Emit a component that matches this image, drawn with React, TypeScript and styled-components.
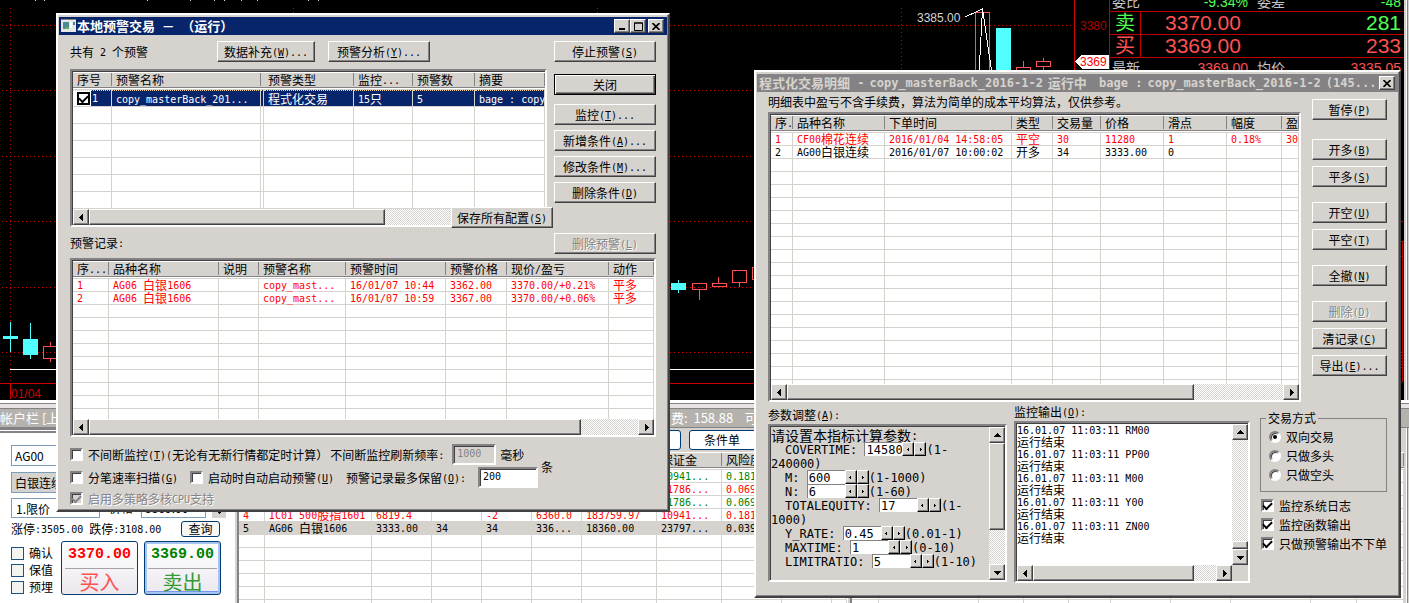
import React from 'react';
import styled, { createGlobalStyle, css } from 'styled-components';

const FACE = '#d6d3ce';
const SHADE = '#848284';
const DARK = '#424142';
const NAVY = '#08246b';
const RED = '#ff0000';

const Global = createGlobalStyle`
  * { box-sizing: border-box; }
  body { margin: 0; background: #000; }
  body, button, input, select, table {
    font-family: "Noto Sans CJK SC", sans-serif;
    font-size: 12px;
    line-height: 16px;
    color: #000;
  }
`;

/* ---------- text ---------- */

const Latin = styled.span<{ $size: number; $wrap?: boolean }>`
  font-family: "DejaVu Sans Mono", monospace;
  font-size: ${p => p.$size}px;
  line-height: 0;
  vertical-align: 1px;
  white-space: ${p => (p.$wrap ? 'normal' : 'pre')};
`;

/* Latin runs use a half-width face; "&X" underlines the access key. */
function T({ s, size = 10, wrap }: { s: string; size?: number; wrap?: boolean }) {
  const runs = s.split(/([\x20-\x7e]+)/).filter(Boolean);
  return (
    <>
      {runs.map((r, i) => {
        if (!/^[\x20-\x7e]/.test(r)) return <React.Fragment key={i}>{r}</React.Fragment>;
        const at = r.indexOf('&');
        return (
          <Latin key={i} $size={size} $wrap={wrap}>
            {at < 0 ? r : <>{r.slice(0, at)}<u>{r[at + 1]}</u>{r.slice(at + 2)}</>}
          </Latin>
        );
      })}
    </>
  );
}

/* ---------- classic controls ---------- */

const raised = css`
  background: ${FACE};
  border: 1px solid;
  border-color: #fff ${DARK} ${DARK} #fff;
  box-shadow: inset -1px -1px 0 ${SHADE};
`;

const sunken = css`
  border: 2px solid;
  border-color: ${SHADE} #fff #fff ${SHADE};
  box-shadow: inset 1px 1px 0 ${DARK};
`;

const Push = styled.button<{ $w: number; $default?: boolean }>`
  ${raised}
  width: ${p => p.$w}px;
  height: 21px;
  padding: 0;
  line-height: 17px;
  white-space: nowrap;
  ${p => p.$default && css`
    border-color: #000;
    box-shadow: inset 1px 1px 0 #fff, inset -1px -1px 0 ${DARK}, inset -2px -2px 0 ${SHADE};
  `}
  &:disabled { color: ${SHADE}; text-shadow: 1px 1px 0 #fff; }
`;

const Caption = styled.div<{ $active?: boolean }>`
  display: flex;
  align-items: center;
  height: 18px;
  padding: 0 3px 0 2px;
  font-size: 13px;
  font-weight: bold;
  white-space: nowrap;
  background: ${p => (p.$active ? NAVY : SHADE)};
  color: ${p => (p.$active ? '#fff' : FACE)};
`;
const CaptionText = styled.span`
  display: flex;
  flex: 1;
  gap: 5px;
  line-height: 18px;
`;
const CaptionButton = styled.button<{ $gap?: boolean }>`
  ${raised}
  display: grid;
  place-items: center;
  width: 16px;
  height: 14px;
  padding: 0;
  margin-left: ${p => (p.$gap ? 2 : 0)}px;
`;

const Window = styled.section<{ $x: number; $y: number; $w: number; $h: number }>`
  position: absolute;
  left: ${p => p.$x}px;
  top: ${p => p.$y}px;
  width: ${p => p.$w}px;
  min-height: ${p => p.$h}px;
  padding: 2px 1px 1px;
  background: ${FACE};
  border: 2px solid;
  border-color: #fff ${DARK} ${DARK} #fff;
  box-shadow: inset -1px -1px 0 ${SHADE};
`;

const Check = styled.input.attrs({ type: 'checkbox' })`
  ${sunken}
  appearance: none;
  flex: none;
  display: grid;
  place-items: center;
  width: 13px;
  height: 13px;
  margin: 0;
  background: #fff;
  &:checked::before {
    content: '';
    width: 7px;
    height: 4px;
    margin-bottom: 2px;
    border: solid #000;
    border-width: 0 0 2px 2px;
    transform: rotate(-45deg);
  }
  &:disabled { background: ${FACE}; }
  &:disabled::before { border-color: ${SHADE}; }
`;
const Radio = styled.input.attrs({ type: 'radio' })`
  ${sunken}
  appearance: none;
  flex: none;
  display: grid;
  place-items: center;
  width: 12px;
  height: 12px;
  margin: 0;
  border-radius: 50%;
  background: #fff;
  &:checked::before {
    content: '';
    width: 4px;
    height: 4px;
    border-radius: 50%;
    background: #000;
  }
`;
const Choice = styled.label<{ $off?: boolean }>`
  display: flex;
  align-items: center;
  gap: 5px;
  height: 19px;
  white-space: nowrap;
  ${p => p.$off && css`color: ${SHADE}; text-shadow: 1px 1px 0 #fff;`}
`;
const Field = styled.input<{ $w: number }>`
  ${sunken}
  width: ${p => p.$w}px;
  height: 21px;
  padding: 0 0 3px 3px;
  background: #fff;
  font-family: "DejaVu Sans Mono", monospace;
  font-size: 10px;
  &:disabled { background: ${FACE}; color: ${SHADE}; }
`;

/* ---------- scroll bars ---------- */

const Track = styled.div<{ $vertical?: boolean }>`
  display: flex;
  flex: none;
  flex-direction: ${p => (p.$vertical ? 'column' : 'row')};
  ${p => (p.$vertical ? 'width' : 'height')}: 16px;
  background: repeating-conic-gradient(#fff 0 25%, ${FACE} 0 50%) 0 0 / 2px 2px;
`;
const Arrow = styled.button`
  ${raised}
  display: grid;
  place-items: center;
  flex: none;
  width: 16px;
  height: 16px;
  padding: 0;
`;
const Thumb = styled.div<{ $size: number }>`
  ${raised}
  flex: 0 0 ${p => p.$size}px;
`;
const Rest = styled.div`flex: 1;`;

const arrows = { left: 'M5 0v7L1 3.500z', right: 'M2 0v7l4-3.500z', up: 'M0 5h7L3.500 1z', down: 'M0 2h7l-3.500 4z' };
const Glyph = ({ d }: { d: keyof typeof arrows }) => (
  <svg width="7" height="7" viewBox="0 0 7 7" shapeRendering="crispEdges"><path d={arrows[d]} /></svg>
);

function Scroll({ vertical, thumb, atEnd }: { vertical?: boolean; thumb: number; atEnd?: boolean }) {
  return (
    <Track $vertical={vertical}>
      <Arrow aria-label="back"><Glyph d={vertical ? 'up' : 'left'} /></Arrow>
      {atEnd && <Rest />}
      <Thumb $size={thumb} />
      {!atEnd && <Rest />}
      <Arrow aria-label="forward"><Glyph d={vertical ? 'down' : 'right'} /></Arrow>
    </Track>
  );
}

/* ---------- lists ---------- */

const Frame = styled.div<{ $h: number; $face?: boolean }>`
  ${sunken}
  display: flex;
  flex-direction: column;
  height: ${p => p.$h}px;
  padding: 1px 0 0 1px;
  background: ${p => (p.$face ? FACE : '#fff')};
`;
const View = styled.div`
  flex: 1;
  min-height: 0;
  overflow: hidden;
`;
const Grid = styled.table`
  table-layout: fixed;
  width: 100%;
  border-spacing: 0;
`;
const Th = styled.th`
  height: 18px;
  padding: 0;
  overflow: hidden;
  font-weight: normal;
  text-align: left;
  white-space: nowrap;
  background: linear-gradient(#fff 0 1px, ${FACE} 1px 15px, ${SHADE} 15px 16px, #fff 16px 17px, ${FACE} 17px);
`;
const ThLabel = styled.span`
  display: block;
  height: 13px;
  margin-bottom: 3px;
  padding-left: 4px;
  line-height: 13px;
  border-right: 1px solid ${SHADE};
  box-shadow: 1px 0 0 #fff;
`;
const Tr = styled.tr<{ $h: number; $color?: string; $bg?: string }>`
  color: ${p => p.$color || '#000'};
  td {
    height: ${p => p.$h}px;
    padding: 0 0 0 4px;
    line-height: 12px;
    white-space: nowrap;
    border: solid ${FACE};
    border-width: 0 1px 1px 0;
    background: ${p => p.$bg || 'transparent'};
  }
`;
const Picked = styled(Tr)`
  td {
    line-height: 14px;
    color: #fff;
    background: ${NAVY};
    border-top: 1px dotted #f7d384;
  }
  td:first-child {
    background: linear-gradient(90deg, #fff 18px, ${NAVY} 18px);
  }
`;
const CheckCell = styled.span`
  display: flex;
  align-items: center;
  gap: 2px;
  ${Check} { border: 2px solid #000; box-shadow: none; }
`;

type Row = { cells: string[]; color?: string; bg?: string };
type ListProps = { cols: number[]; heads: string[]; rows: Row[]; total: number; rowH?: number; first?: React.ReactNode };

function List({ cols, heads, rows, total, rowH = 13, first }: ListProps) {
  const blank = Math.max(0, total - rows.length - (first ? 1 : 0));
  return (
    <Grid>
      <colgroup>{cols.map((w, i) => <col key={i} style={i < cols.length - 1 ? { width: w } : undefined} />)}</colgroup>
      <thead><tr>{cols.map((_, i) => <Th key={i}><ThLabel><T s={heads[i] || ''} /></ThLabel></Th>)}</tr></thead>
      <tbody>
        {first}
        {rows.map((r, i) => (
          <Tr key={i} $h={rowH} $color={r.color} $bg={r.bg}>{cols.map((_, j) => <td key={j}><T s={r.cells[j] || ''} /></td>)}</Tr>
        ))}
        {Array.from({ length: blank }, (_, i) => (
          <Tr key={'b' + i} $h={rowH}>{cols.map((_, j) => <td key={j} />)}</Tr>
        ))}
      </tbody>
    </Grid>
  );
}

/* ---------- trading desktop behind the dialogs ---------- */

const Desktop = styled.main`
  position: relative;
  display: flex;
  flex-direction: column;
  min-width: 1000px;
  height: 100vh;
  overflow: hidden;
  background: #000;
`;
const Market = styled.div`
  display: flex;
  flex: 0 0 400px;
`;
const ChartBox = styled.div`
  flex: 1;
  min-width: 0;
  overflow: hidden;
  svg { display: block; }
  text { font-family: "Liberation Sans", sans-serif; font-size: 12px; }
`;
const Quote = styled.div`
  display: flex;
  flex-direction: column;
  width: 295px;
  border-left: 1px solid #c00000;
  color: #c6c3c6;
  overflow: hidden;
  font-family: "Liberation Sans", "Noto Sans CJK SC", sans-serif;
  font-size: 14px;
`;
const QuoteInfo = styled.div<{ $h: number; $top?: boolean }>`
  display: grid;
  grid-template-columns: 50px 90px 60px 1fr;
  align-content: ${p => (p.$top ? 'start' : 'end')};
  height: ${p => p.$h}px;
  padding: ${p => (p.$top ? 1 : 0)}px 3px 0 2px;
  border-top: ${p => (p.$top ? '1px solid #c00000' : 0)};
  line-height: 18px;
  b { font-weight: normal; text-align: right; color: #ff5152; padding-right: 4px; }
  b:last-child { padding-right: 0; }
  span:nth-child(3) { padding-left: 5px; }
`;
const Green = styled.b`&&, & { color: #52ff52 !important; }`;
const QuoteRow = styled.div<{ $c: string }>`
  display: grid;
  grid-template-columns: 31px 1fr auto;
  height: 23px;
  border-top: 1px solid #c00000;
  color: ${p => p.$c};
  font-size: 21px;
  line-height: 22px;
  padding-right: 3px;
`;
const Side = styled.span`
  display: grid;
  place-items: center;
  border-right: 1px solid #c00000;
  font-size: 20px;
`;
const Price = styled.span`padding-left: 24px; color: #ff5152;`;
const VolumeScale = styled.svg`display: block; align-self: flex-end;`;
const Edge = styled.div`
  width: 5px;
  background: linear-gradient(90deg, ${FACE} 2px, #fff 2px 3px, ${SHADE} 3px 4px, ${FACE} 4px);
`;

const DockHead = styled.div`
  display: flex;
  flex: none;
  height: 28px;
  padding-top: 8px;
  background: linear-gradient(#fff 0 3px, ${SHADE} 3px 4px, #e7e3e7 4px 8px, ${SHADE} 8px 9px, #b5b2ad 9px 27px, ${SHADE} 27px);
  color: #fff;
  font-size: 13px;
  line-height: 20px;
  white-space: pre;
`;
const HeadLeft = styled.span`flex: 0 0 671px;`;
const Dock = styled.div`
  display: flex;
  flex: 1;
  min-height: 0;
`;
const Order = styled.form`
  display: flex;
  flex-direction: column;
  width: 234px;
  padding: 12px 0 0 11px;
  border-top: 5px double ${SHADE};
  background: #fff;
`;
const OrderField = styled.input<{ $w: number; $grey?: boolean }>`
  flex: none;
  width: ${p => p.$w}px;
  height: 21px;
  padding: 0 3px;
  border: 1px solid #7b9ebd;
  background: ${p => (p.$grey ? FACE : '#fff')};
`;
const OrderLine = styled.div<{ $top: number }>`
  display: flex;
  align-items: center;
  margin-top: ${p => p.$top}px;
  white-space: nowrap;
`;
const OrderSelect = styled.select`
  width: 89px;
  height: 20px;
  border: 1px solid #7b9ebd;
  background: #fff;
  padding: 0;
`;
const OrderLabel = styled.label`padding: 0 8px 0 9px;`;
const Spin = styled.button`
  width: 14px;
  height: 20px;
  margin-left: 6px;
  padding: 4px 0 0;
  border: 0;
  background: ${FACE};
`;
const Limits = styled.span`flex: 0 0 170px;`;
const Query = styled.button`
  width: 39px;
  height: 16px;
  padding: 0;
  line-height: 14px;
  border: 1px solid #003c74;
  border-radius: 3px;
  background: #f7f7f7;
`;
const Flags = styled.div`
  display: flex;
  flex-direction: column;
  gap: 1px;
  width: 50px;
  padding-top: 5px;
`;
const Flag = styled.label`
  display: flex;
  align-items: center;
  gap: 5px;
`;
const FlagBox = styled.input.attrs({ type: 'checkbox' })`
  appearance: none;
  width: 13px;
  height: 13px;
  margin: 0;
  border: 1px solid #1c5180;
  background: #f3f3ef;
`;
const Deal = styled.button<{ $c: string; $soft: string; $focus?: boolean }>`
  width: 77px;
  height: 54px;
  margin-right: 6px;
  padding: 0 3px;
  border: 1px solid #003c74;
  border-radius: 3px;
  background: linear-gradient(#fff, #ebe8ee);
  ${p => p.$focus && css`box-shadow: inset 0 0 0 2px #a6c4f2, inset 0 -3px 0 #7b96f2;`}
  strong {
    display: block;
    height: 27px;
    border-bottom: 1px solid #a5a2a5;
    font: bold 15px/25px "Liberation Mono", monospace;
    color: ${p => p.$c};
  }
  span { display: block; font-size: 20px; line-height: 25px; color: ${p => p.$soft}; }
`;
const Splitter = styled.div`
  width: 5px;
  flex: none;
  background: linear-gradient(90deg, #fff 1px, ${FACE} 1px 3px, ${SHADE} 3px);
`;
const Pane = styled.div<{ $w?: number }>`
  flex: ${p => (p.$w ? `0 0 ${p.$w}px` : '1')};
  min-width: 0;
  overflow: hidden;
  background: #fff;
`;
const Tabs = styled.div`
  display: flex;
  gap: 8px;
  height: 24px;
  padding: 2px 0 0 366px;
  background: ${FACE};
`;
const Tab = styled.button`
  flex: none;
  width: 76px;
  height: 20px;
  padding: 0 10px 0 0;
  line-height: 16px;
  border: 1px solid #003c74;
  border-radius: 3px;
  background: #fff;
`;

/* ---------- dialog layout ---------- */

const AlertBody = styled.div`padding: 6px 11px 0 11px;`;
const ToolRow = styled.div`
  display: flex;
  align-items: center;
  gap: 13px;
`;
const Count = styled.span`flex: 0 0 134px;`;
const Spacer = styled.span`flex: 1;`;
const Split = styled.div<{ $top: number }>`
  display: flex;
  justify-content: space-between;
  margin-top: ${p => p.$top}px;
`;
const AlertLeft = styled.div`
  position: relative;
  width: 477px;
  height: 189px;
`;
const SaveAll = styled(Push)`
  position: absolute;
  right: -6px;
  top: 138px;
`;
const ListTitle = styled.div`padding-top: 8px;`;
const ButtonCol = styled.div<{ $top: number; $gap: number }>`
  display: flex;
  flex-direction: column;
  gap: ${p => p.$gap}px;
  padding-top: ${p => p.$top}px;
  > :first-child { margin-bottom: 4px; }
`;
const ButtonGroup = styled.div`
  display: flex;
  flex-direction: column;
  gap: 6px;
`;
const LastPush = styled(Push)`margin: auto 0 4px;`;
const Options = styled.div`
  display: flex;
  gap: 3px;
  padding-top: 6px;
`;
const OptionRows = styled.div`width: 468px;`;
const OptionRow = styled.div<{ $spread?: boolean }>`
  display: flex;
  align-items: center;
  justify-content: ${p => (p.$spread ? 'space-between' : 'flex-start')};
  height: 23px;
  gap: ${p => (p.$spread ? 0 : 2)}px;
  white-space: nowrap;
`;
const Millis = styled.label`padding-left: 2px;`;
const Unit = styled.span`padding-top: 16px;`;

const DetailBody = styled.div`padding: 2px 11px 0 11px;`;
const DetailLeft = styled.div`width: 533px;`;
const Note = styled.div`height: 18px;`;
const Lower = styled.div`
  display: flex;
  margin-top: 2px;
`;
const ParamCol = styled.div`
  width: 239px;
  margin-right: 7px;
  padding-top: 3px;
`;
const OutputCol = styled.div`
  width: 236px;
  margin-right: 10px;
`;
const ColLabel = styled.div`height: 17px;`;
const ParamRow = styled.div`
  display: flex;
  flex: 1;
  min-height: 0;
`;
const Params = styled.div`
  flex: 1;
  overflow: hidden;
  padding-top: 1px;
  font-size: 14px;
  line-height: 14px;
`;
const Param = styled.div`
  text-indent: 14px;
  input, button { text-indent: 0; vertical-align: top; height: 14px; }
`;
const ParamField = styled.input`
  width: 38px;
  padding: 0 0 0 1px;
  border: solid ${SHADE};
  border-width: 1px 0 0 1px;
  background: #fff;
  font: 12px/12px "DejaVu Sans Mono", monospace;
`;
const Nudge = styled.button`
  width: 12px;
  padding: 0;
  border: 1px solid;
  border-color: #fff #000 #000 #fff;
  background: ${FACE};
  box-shadow: inset -1px -1px 0 ${SHADE};
  svg { display: block; margin: auto; }
`;
const Log = styled.div`
  flex: 1;
  overflow: hidden;
  line-height: 12px;
`;
const Corner = styled.div`
  flex: 0 0 16px;
  background: ${FACE};
`;
const HRow = styled.div`
  display: flex;
  > :first-child { flex: 1; }
`;
const Mode = styled.fieldset`
  width: 127px;
  height: 82px;
  margin: 6px 0 4px;
  padding: 1px 0 0 8px;
  border: 1px solid ${SHADE};
  legend { margin-left: -3px; padding: 0 2px; }
`;
const DetailFlags = styled.div`padding-left: 1px;`;

/* ---------- data ---------- */

const params: [string, string, string][] = [
  ['COVERTIME:', '14580', '(1-240000)'],
  ['M:', '600', '(1-1000)'],
  ['N:', '6', '(1-60)'],
  ['TOTALEQUITY:', '17', '(1-1000)'],
  ['Y_RATE:', '0.45', '(0.01-1)'],
  ['MAXTIME:', '1', '(0-10)'],
  ['LIMITRATIO:', '5', '(1-10)'],
];

const positions: Row[] = [
  { color: '#008200', cells: ['1', '', '', '', '', '', '', '10941...', '0.181'] },
  { color: RED, cells: ['2', '', '', '', '', '', '', '81786...', '0.069'] },
  { color: '#008200', cells: ['3', '', '', '', '', '', '', '81786...', '0.069'] },
  { color: RED, cells: ['4', 'IC01 500股指1601', '6819.4', '', '-2', '6360.0', '183759.97', '10941...', '0.181'] },
  { bg: FACE, cells: ['5', 'AG06 白银1606', '3333.00', '34', '34', '336...', '18360.00', '23797...', '0.039'] },
];

const NudgeGlyph = ({ right }: { right?: boolean }) => (
  <svg width="5" height="5" viewBox="0 0 5 5" shapeRendering="crispEdges"><path d={right ? 'M2 0v5l2-2.500z' : 'M3 0v5L1 2.500z'} /></svg>
);

const Cross = () => (
  <svg width="8" height="7" viewBox="0 0 8 7"><path d="M.5 0l7 7M7.500 0l-7 7" stroke="#000" strokeWidth="1.600" /></svg>
);

function Chart() {
  return (
    <ChartBox>
      <svg width="1109" height="400" shapeRendering="crispEdges">
        <g stroke="#d00000" strokeDasharray="1 3">
          {[25, 90, 156, 221, 287, 352].map(y => <path key={y} d={`M2 ${y}.5H1074`} />)}
          {[10, 293, 597, 901].map(x => <path key={x} d={`M${x}.5 8V383`} />)}
        </g>
        {[35, 44, 147, 190, 214, 224, 241, 257, 308, 318].map(x => <path key={x} d={`M${x} .5h1`} stroke="#ddd" />)}
        <path d="M10 369.500H1109" stroke="#fff" />
        <path d="M0 383.500H1109M10.500 384v15M1074.500 0V400" stroke="#d00000" />
        <g fill="#52ffff">
          <path d="M3 336h15v3H3zM10 322h1v30h-1zM23 339h15v16H23zM30 323h1v36h-1z" />
          <path d="M671 283h15v7h-15zM678 280h1v13h-1zM996 28h15v50h-15z" />
        </g>
        <g fill="none" stroke="#ff5152">
          <path d="M43.500 346.500h15v12h-15zM50.500 342v4M50.500 358v4" />
          <path d="M692.500 283.500h14v6h-14zM699.500 290v10M712.500 283.500h14v3h-14zM718.500 277v6M732.500 270.500h14v12h-14zM739.500 283v4M752.500 267.500h14v12h-14z" />
          <path d="M975.500 12.500h14v66h-14zM1016.500 67.500h14v12h-14zM1023.500 61v6M1036.500 61.500h14v5h-14zM1043.500 58v3M1043.500 67v10" />
        </g>
        <path d="M965 17L982.500 9L979 74M982.500 9L992 74" fill="none" stroke="#fff" />
        <path d="M1075 61.500l7-7h27v14h-27z" fill="#fff" />
        <text x="917" y="22" fill="#d6d3d6">3385.00</text>
        <text x="1080" y="30" fill="#b00000">3380</text>
        <text x="1080" y="66" fill={RED}>3369</text>
        <text x="11" y="398" fill="#d00000">01/04</text>
      </svg>
    </ChartBox>
  );
}

export default function App() {
  return (
    <>
      <Global />
      <Desktop>
        <Market>
          <Chart />
          <Quote>
            <QuoteInfo $h={11}><span>委比</span><Green>-9.34%</Green><span>委差</span><Green>-48</Green></QuoteInfo>
            <QuoteRow $c="#52ff52"><Side>卖</Side><Price>3370.00</Price><span>281</span></QuoteRow>
            <QuoteRow $c="#ff5152"><Side>买</Side><Price>3369.00</Price><span>233</span></QuoteRow>
            <QuoteInfo $h={143} $top><span>最新</span><b>3369.00</b><span>均价</span><b>3335.05</b></QuoteInfo>
            <VolumeScale width="4" height="200" shapeRendering="crispEdges">
              <path d="M0 21.500h3M0 41.500h4M0 56.500h3M2.500 41V182M0 152.500h3M0 155.500h3M0 158.500h3M0 161.500h3M0 164.500h3M0 167.500h3M0 182.500h2" stroke="#c00000" />
            </VolumeScale>
          </Quote>
          <Edge />
        </Market>
        <DockHead>
          <HeadLeft>帐户栏 [上海</HeadLeft>
          <span>费:  158.88    可用</span>
        </DockHead>
        <Dock>
          <Order>
            <OrderField $w={180} defaultValue="AG00" aria-label="合约" />
            <OrderLine $top={6}><OrderField $w={180} $grey defaultValue="白银连续" aria-label="名称" /></OrderLine>
            <OrderLine $top={4}>
              <OrderSelect aria-label="方式"><option>1.限价</option></OrderSelect>
              <OrderLabel htmlFor="price">价格</OrderLabel>
              <OrderField id="price" $w={65} defaultValue="3369.00" />
              <Spin type="button" aria-label="调整"><Glyph d="down" /></Spin>
            </OrderLine>
            <OrderLine $top={3}>
              <Limits><T s="涨停:3505.00 跌停:3108.00" /></Limits>
              <Query type="button">查询</Query>
            </OrderLine>
            <OrderLine $top={3}>
              <Flags>
                {['确认', '保值', '预埋'].map(n => <Flag key={n}><FlagBox />{n}</Flag>)}
              </Flags>
              <Deal type="button" $c={RED} $soft="#ff5152"><strong>3370.00</strong><span>买入</span></Deal>
              <Deal type="button" $c="#008200" $soft="#319a31" $focus><strong>3369.00</strong><span>卖出</span></Deal>
            </OrderLine>
          </Order>
          <Splitter />
          <Pane $w={608}>
            <Tabs><Tab>平当</Tab><Tab>条件单</Tab></Tabs>
            <List
              cols={[26, 107, 60, 50, 50, 50, 75, 65, 60, 50, 20]}
              heads={['', '', '', '', '', '', '', '保证金', '风险度']}
              rows={positions}
              total={11}
            />
          </Pane>
          <Splitter />
          <Pane>
            <Tabs />
            <List cols={[27, 100, 45, 45, 42, 60, 60, 80, 46, 50]} heads={[]} rows={[]} total={11} />
          </Pane>
          <Edge />
        </Dock>

        <Window $x={56} $y={13} $w={614} $h={499}>
          <Caption $active>
            <svg width="16" height="14" viewBox="0 0 16 14" shapeRendering="crispEdges">
              <path d="M0 0h15v13H0z" fill="#e7e7e7" /><path d="M0 0h15v1H0z" fill="#848284" />
              <path d="M2 3h6v7H2z" fill="#4a8a94" /><path d="M4 8h4v2H4z" fill="#5ab25a" />
              <path d="M9 3h2v6H9z" fill="#fff" /><path d="M12 3h2v3h-2z" fill="#4a8a94" />
            </svg>
            <CaptionText><span><T size={11} s="本地预警交易 － （运行）" /></span></CaptionText>
            <CaptionButton aria-label="最小化"><svg width="9" height="8"><path d="M1 6h6v2H1z" /></svg></CaptionButton>
            <CaptionButton aria-label="最大化"><svg width="9" height="9"><path d="M.5 1h8v7.500h-8zM0 1h9" fill="none" stroke="#000" /></svg></CaptionButton>
            <CaptionButton $gap aria-label="关闭窗口"><Cross /></CaptionButton>
          </Caption>
          <AlertBody>
            <ToolRow>
              <Count><T s="共有 2 个预警" /></Count>
              <Push $w={98}><T s="数据补充(&W)..." /></Push>
              <Push $w={102}><T s="预警分析(&Y)..." /></Push>
              <Spacer />
              <Push $w={102}><T s="停止预警(&S)" /></Push>
            </ToolRow>
            <Split $top={7}>
              <AlertLeft>
                <Frame $h={158}>
                  <View>
                    <List
                      rowH={17}
                      cols={[39, 149, 3, 90, 59, 62, 70]}
                      heads={['序号', '预警名称', '', '预警类型', '监控...', '预警数', '摘要']}
                      rows={[]}
                      total={7}
                      first={
                        <Picked $h={17}>
                          <td><CheckCell><Check defaultChecked aria-label="启用预警 1" /><T s="1" /></CheckCell></td>
                          <td><T s="copy_masterBack_201..." /></td>
                          <td />
                          <td>程式化交易</td>
                          <td><T s="15只" /></td>
                          <td><T s="5" /></td>
                          <td><T s="bage : copy_masterBack" /></td>
                        </Picked>
                      }
                    />
                  </View>
                  <Scroll thumb={296} />
                </Frame>
                <SaveAll $w={102}><T s="保存所有配置(&S)" /></SaveAll>
                <ListTitle><T s="预警记录:" /></ListTitle>
              </AlertLeft>
              <ButtonCol $top={5} $gap={5}>
                <Push $w={102} $default>关闭</Push>
                <Push $w={102}><T s="监控(&T)..." /></Push>
                <Push $w={102}><T s="新增条件(&A)..." /></Push>
                <Push $w={102}><T s="修改条件(&M)..." /></Push>
                <Push $w={102}><T s="删除条件(&D)" /></Push>
                <LastPush $w={102} disabled><T s="删除预警(&L)" /></LastPush>
              </ButtonCol>
            </Split>
            <Frame $h={179}>
              <View>
                <List
                  cols={[36, 110, 40, 87, 100, 61, 102, 45]}
                  heads={['序...', '品种名称', '说明', '预警名称', '预警时间', '预警价格', '现价/盈亏', '动作']}
                  rows={[
                    { color: RED, cells: ['1', 'AG06 白银1606', '', 'copy_mast...', '16/01/07 10:44', '3362.00', '3370.00/+0.21%', '平多'] },
                    { color: RED, cells: ['2', 'AG06 白银1606', '', 'copy_mast...', '16/01/07 10:59', '3367.00', '3370.00/+0.06%', '平多'] },
                  ]}
                  total={12}
                />
              </View>
              <Scroll thumb={492} />
            </Frame>
            <Options>
              <OptionRows>
                <OptionRow>
                  <Choice><Check /><span><T s="不间断监控(&T)(无论有无新行情都定时计算）" /></span></Choice>
                  <label htmlFor="rate"><T s="不间断监控刷新频率: " /></label>
                  <Field id="rate" $w={44} defaultValue="1000" disabled />
                  <Millis htmlFor="rate">毫秒</Millis>
                </OptionRow>
                <OptionRow $spread>
                  <Choice><Check /><span><T s="分笔速率扫描(&G)" /></span></Choice>
                  <Choice><Check /><span><T s="启动时自动启动预警(&U)" /></span></Choice>
                  <label htmlFor="keep"><T s="预警记录最多保留(&O):" /></label>
                  <Field id="keep" $w={60} defaultValue="200" />
                </OptionRow>
                <Choice $off><Check disabled defaultChecked /><span><T s="启用多策略多核CPU支持" /></span></Choice>
              </OptionRows>
              <Unit>条</Unit>
            </Options>
          </AlertBody>
        </Window>

        <Window $x={754} $y={70} $w={647} $h={528}>
          <Caption>
            <CaptionText>
              <span><T size={12} s="程式化交易明细 -" /></span>
              <span><T size={12} s="copy_masterBack_2016-1-2" /></span>
              <span>运行中</span>
              <span><T size={12} s=" bage :" /></span>
              <span><T size={12} s="copy_masterBack_2016-1-2" /></span>
              <span><T size={12} s="(145..." /></span>
            </CaptionText>
            <CaptionButton aria-label="关闭窗口"><Cross /></CaptionButton>
          </Caption>
          <DetailBody>
            <Split $top={0}>
              <DetailLeft>
                <Note>明细表中盈亏不含手续费，算法为简单的成本平均算法，仅供参考。</Note>
                <Frame $h={290}>
                  <View>
                    <List
                      cols={[22, 92, 127, 41, 48, 63, 63, 55, 18]}
                      heads={['序.', '品种名称', '下单时间', '类型', '交易量', '价格', '滑点', '幅度', '盈']}
                      rows={[
                        { color: RED, cells: ['1', 'CF00棉花连续', '2016/01/04 14:58:05', '平空', '30', '11280', '1', '0.18%', '30'] },
                        { cells: ['2', 'AG00白银连续', '2016/01/07 10:00:02', '开多', '34', '3333.00', '0', '', ''] },
                      ]}
                      total={20}
                    />
                  </View>
                  <Scroll thumb={407} />
                </Frame>
              </DetailLeft>
              <ButtonCol $top={5} $gap={15}>
                <Push $w={75}><T s="暂停(&P)" /></Push>
                <ButtonGroup><Push $w={75}><T s="开多(&B)" /></Push><Push $w={75}><T s="平多(&S)" /></Push></ButtonGroup>
                <ButtonGroup><Push $w={75}><T s="开空(&U)" /></Push><Push $w={75}><T s="平空(&T)" /></Push></ButtonGroup>
                <Push $w={75}><T s="全撤(&N)" /></Push>
                <ButtonGroup>
                  <Push $w={75} disabled><T s="删除(&D)" /></Push>
                  <Push $w={75}><T s="清记录(&C)" /></Push>
                  <Push $w={75}><T s="导出(&E)..." /></Push>
                </ButtonGroup>
              </ButtonCol>
            </Split>
            <Lower>
              <ParamCol>
                <ColLabel><T s="参数调整(&A):" /></ColLabel>
                <Frame $h={158} $face>
                  <ParamRow>
                    <Params>
                      <div><T size={12} s="请设置本指标计算参数:" /></div>
                      {params.map(([name, value, range]) => (
                        <Param key={name}>
                          <label htmlFor={name}><T size={12} s={name + ' '} /></label>
                          <ParamField id={name} defaultValue={value} />
                          <Nudge aria-label="减"><NudgeGlyph /></Nudge>
                          <Nudge aria-label="加"><NudgeGlyph right /></Nudge>
                          <T size={12} s={range.replace('-', '-\u200b').split('\u200b')[0]} wrap />
                          <wbr />
                          <T size={12} s={range.slice(range.indexOf('-') + 1)} wrap />
                        </Param>
                      ))}
                    </Params>
                    <Scroll vertical thumb={87} />
                  </ParamRow>
                </Frame>
              </ParamCol>
              <OutputCol>
                <ColLabel><T s="监控输出(&O):" /></ColLabel>
                <Frame $h={162}>
                  <ParamRow>
                    <Log>
                      {['RM00', 'PP00', 'M00', 'Y00', 'ZN00'].map(c => (
                        <React.Fragment key={c}>
                          <div><T s={'16.01.07 11:03:11 ' + c} /></div>
                          <div>运行结束</div>
                        </React.Fragment>
                      ))}
                    </Log>
                    <Scroll vertical thumb={8} atEnd />
                  </ParamRow>
                  <HRow><Scroll thumb={161} /><Corner /></HRow>
                </Frame>
              </OutputCol>
              <div>
                <Mode>
                  <legend>交易方式</legend>
                  {['双向交易', '只做多头', '只做空头'].map((m, i) => (
                    <Choice key={m}><Radio name="mode" defaultChecked={i === 0} />{m}</Choice>
                  ))}
                </Mode>
                <DetailFlags>
                  {['监控系统日志', '监控函数输出', '只做预警输出不下单'].map(m => (
                    <Choice key={m}><Check defaultChecked />{m}</Choice>
                  ))}
                </DetailFlags>
              </div>
            </Lower>
          </DetailBody>
        </Window>
      </Desktop>
    </>
  );
}
